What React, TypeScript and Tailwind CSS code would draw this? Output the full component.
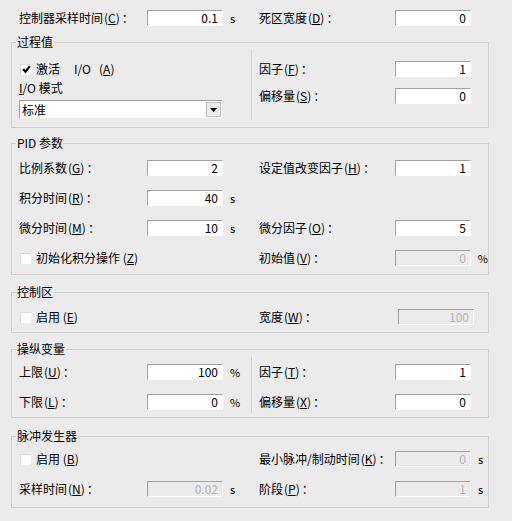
import type { ReactNode } from "react";

// Windows-style PID controller settings dialog

const FONT = "font-['Noto_Sans_CJK_SC','Noto_Sans',sans-serif]";

function Lbl({ text, k, w = "" }: { text: string; k: string; w?: string }) {
  return (
    <span className={`whitespace-nowrap ${w}`}>
      {text}
      <span className="ml-[1px]">
        (<span className="underline underline-offset-1">{k}</span>)
      </span>
      <span className="ml-[2px]">：</span>
    </span>
  );
}

function Field({ value, disabled, cls = "" }: { value: string; disabled?: boolean; cls?: string }) {
  return (
    <div
      className={`h-4 w-[76px] shrink-0 border-t border-l border-[#a0a0a0] border-r border-b border-r-white border-b-white pr-[4px] text-right text-[12px] leading-[14px] ${
        disabled ? "bg-[#ebebeb] text-[#b4b4b4]" : "bg-white text-black"
      } ${cls}`}
    >
      {value}
    </div>
  );
}

function Unit({ u }: { u: string }) {
  return <span className="ml-[7px] text-[11px]">{u}</span>;
}

function Check({ checked, children }: { checked?: boolean; children: ReactNode }) {
  return (
    <div className="flex h-4 items-center pl-[1px]">
      <span className="flex h-[11px] w-[11px] items-center justify-center border-t border-l border-[#dcdcdc] bg-white">
        {checked && (
          <svg width="9" height="9" viewBox="0 0 9 9">
            <polyline points="1.2,4 3.5,6.8 7.8,1.2" fill="none" stroke="#000" strokeWidth="2.2" />
          </svg>
        )}
      </span>
      <span className="ml-[5px] whitespace-nowrap">{children}</span>
    </div>
  );
}

function Group({ title, className = "", children }: { title: string; className?: string; children: ReactNode }) {
  return (
    <fieldset className={`ml-[11px] w-[478px] min-w-0 border border-[#d0d0d0] pl-[7px] ${className}`}>
      <legend className="-ml-[3px] px-[1px] text-[12px] leading-4">{title}</legend>
      {children}
    </fieldset>
  );
}

function Row({ children }: { children: ReactNode }) {
  return <div className="flex h-4 items-center">{children}</div>;
}

const Sep = ({ cls }: { cls: string }) => <div className={`w-px self-stretch bg-[#d0d0d0] ${cls}`} />;

export default function App() {
  return (
    <div className={`${FONT} h-[521px] w-[512px] bg-[#ebebeb] pt-[10px] text-[12px] leading-4 text-black`}>
      {/* top row */}
      <div className="flex h-4 items-center pl-[19px]">
        <div className="flex w-[240px] items-center">
          <Lbl text="控制器采样时间" k="C" w="w-[128px]" />
          <Field value="0.1" />
          <Unit u="s" />
        </div>
        <Lbl text="死区宽度" k="D" w="w-[136px]" />
        <Field value="0" cls="w-[75px]" />
      </div>

      <Group title="过程值" className="mt-[8px]">
        <div className="flex">
          <div className="flex w-[232px] flex-col pt-[11px] pb-[9px]">
            <Check checked>
              激活<span className="ml-[14px]">I/O</span>
              <span className="ml-[8px]">
                (<span className="underline underline-offset-1">A</span>)
              </span>
            </Check>
            <div className="mt-[3px] h-4">
              <span className="underline underline-offset-1">I</span>/O 模式
            </div>
            <div className="mt-[4px] flex h-[18px] w-[203px] items-center border-t border-l border-[#a0a0a0] bg-white pl-[2px]">
              <span className="flex-1">标准</span>
              <span className="mr-[1px] flex h-[15px] w-[15px] items-center justify-center border border-[#c0c0c0] bg-[#ececec]">
                <svg width="7" height="4" viewBox="0 0 7 4">
                  <polygon points="0,0 7,0 3.5,4" fill="#000" />
                </svg>
              </span>
            </div>
          </div>
          <Sep cls="mb-[7px]" />
          <div className="flex flex-col gap-[11px] pl-[7px] pt-[11px]">
            <Row>
              <Lbl text="因子" k="F" w="w-[136px]" />
              <Field value="1" />
            </Row>
            <Row>
              <Lbl text="偏移量" k="S" w="w-[136px]" />
              <Field value="0" />
            </Row>
          </div>
        </div>
      </Group>

      <Group title="PID 参数" className="mt-[7px]">
        <div className="flex flex-col gap-[14px] pt-[9px] pb-[8px]">
          <Row>
            <div className="flex w-[240px] items-center">
              <Lbl text="比例系数" k="G" w="w-[128px]" />
              <Field value="2" />
            </div>
            <Lbl text="设定值改变因子" k="H" w="w-[136px]" />
            <Field value="1" />
          </Row>
          <Row>
            <div className="flex w-[240px] items-center">
              <Lbl text="积分时间" k="R" w="w-[128px]" />
              <Field value="40" />
              <Unit u="s" />
            </div>
          </Row>
          <Row>
            <div className="flex w-[240px] items-center">
              <Lbl text="微分时间" k="M" w="w-[128px]" />
              <Field value="10" />
              <Unit u="s" />
            </div>
            <Lbl text="微分因子" k="O" w="w-[136px]" />
            <Field value="5" />
          </Row>
          <Row>
            <div className="w-[240px]">
              <Check>
                初始化积分操作 (<span className="underline underline-offset-1">Z</span>)
              </Check>
            </div>
            <Lbl text="初始值" k="V" w="w-[136px]" />
            <Field value="0" disabled />
            <Unit u="%" />
          </Row>
        </div>
      </Group>

      <Group title="控制区" className="mt-[9px]">
        <div className="pt-[9px] pb-[7px]">
          <Row>
            <div className="w-[240px]">
              <Check>
                启用 (<span className="underline underline-offset-1">E</span>)
              </Check>
            </div>
            <Lbl text="宽度" k="W" w="w-[139px]" />
            <Field value="100" disabled />
          </Row>
        </div>
      </Group>

      <Group title="操纵变量" className="mt-[8px]">
        <div className="flex">
          <div className="flex w-[232px] flex-col gap-[14px] pt-[7px] pb-[7px]">
            <Row>
              <Lbl text="上限" k="U" w="w-[128px]" />
              <Field value="100" />
              <Unit u="%" />
            </Row>
            <Row>
              <Lbl text="下限" k="L" w="w-[128px]" />
              <Field value="0" />
              <Unit u="%" />
            </Row>
          </div>
          <Sep cls="mb-[4px]" />
          <div className="flex flex-col gap-[14px] pl-[7px] pt-[7px]">
            <Row>
              <Lbl text="因子" k="T" w="w-[136px]" />
              <Field value="1" cls="w-[75px]" />
            </Row>
            <Row>
              <Lbl text="偏移量" k="X" w="w-[136px]" />
              <Field value="0" cls="w-[75px]" />
            </Row>
          </div>
        </div>
      </Group>

      <Group title="脉冲发生器" className="mt-[10px]">
        <div className="flex flex-col gap-[14px] pt-[7px] pb-[10px]">
          <Row>
            <div className="w-[240px]">
              <Check>
                启用 (<span className="underline underline-offset-1">B</span>)
              </Check>
            </div>
            <Lbl text="最小脉冲/制动时间" k="K" w="w-[136px]" />
            <Field value="0" disabled cls="w-[75px]" />
            <Unit u="s" />
          </Row>
          <Row>
            <div className="flex w-[240px] items-center">
              <Lbl text="采样时间" k="N" w="w-[128px]" />
              <Field value="0.02" disabled />
              <Unit u="s" />
            </div>
            <Lbl text="阶段" k="P" w="w-[136px]" />
            <Field value="1" disabled cls="w-[75px]" />
            <Unit u="s" />
          </Row>
        </div>
      </Group>
    </div>
  );
}
